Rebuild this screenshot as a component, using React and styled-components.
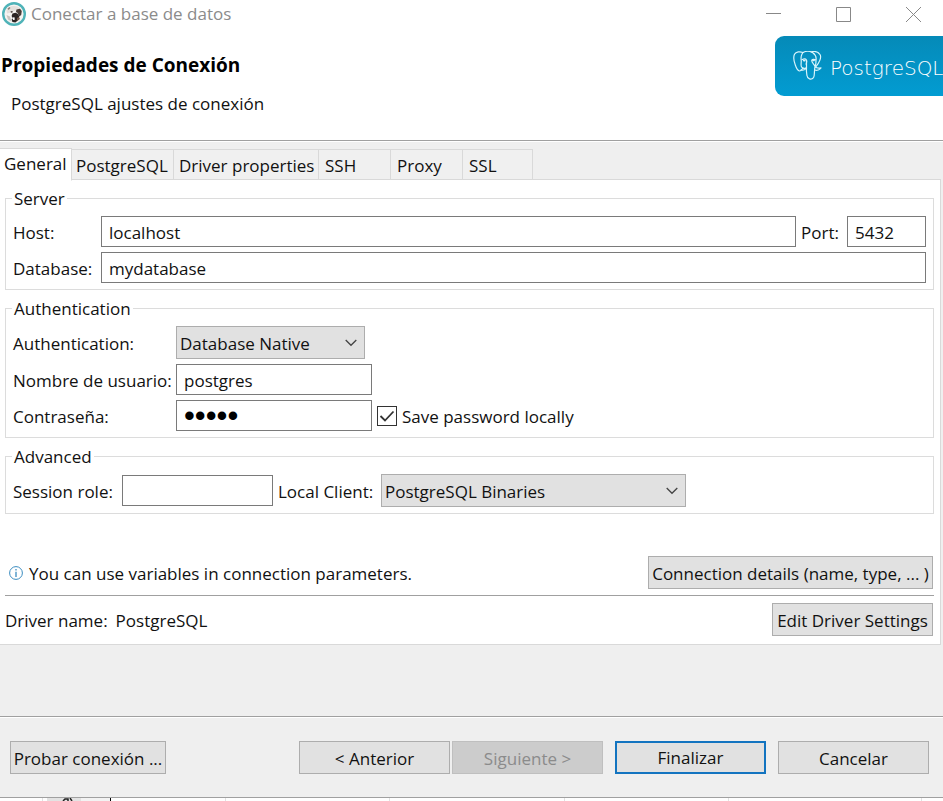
import React from "react";
import styled, { createGlobalStyle } from "styled-components";

const GlobalStyle = createGlobalStyle`
  * { box-sizing: border-box; }
  body {
    margin: 0;
    background: #fff;
    color: #111;
    font-family: "Open Sans", "Noto Sans", sans-serif;
    font-size: 17px;
    line-height: 24px;
  }
  button, input, select { font: inherit; color: inherit; margin: 0; }
`;

const Window = styled.div`
  display: flex;
  flex-direction: column;
  min-height: 100vh;
  overflow: hidden;
`;

const TitleBar = styled.div`
  display: flex;
  align-items: center;
  gap: 5px;
  height: 28px;
  padding-left: 2px;
  color: #8b8b8b;
`;

const TitleText = styled.span`
  flex: 1;
  white-space: nowrap;
`;

const WindowControls = styled.div`
  display: flex;
  gap: 10px;
`;

const WindowButton = styled.button`
  display: grid;
  place-items: center;
  width: 60px;
  height: 28px;
  padding: 0;
  border: 0;
  background: none;
`;

const Header = styled.header`
  display: flex;
  justify-content: space-between;
  height: 113px;
  padding-top: 8px;
  border-bottom: 1px solid #a0a0a0;
`;

const Heading = styled.div`
  display: flex;
  flex-direction: column;
  gap: 15px;
  padding-top: 17px;
`;

const Title = styled.h1`
  margin: 0;
  padding-left: 1px;
  font-size: 19px;
  font-weight: 700;
  line-height: 24px;
  color: #000;
`;

const Subtitle = styled.p`
  margin: 0;
  padding-left: 11px;
`;

const Banner = styled.div`
  display: flex;
  align-items: center;
  gap: 7px;
  width: 168px;
  height: 60px;
  padding-left: 18px;
  overflow: hidden;
  border-radius: 9px 0 0 9px;
  background: linear-gradient(#058ab8, #029cd2);
  color: #fff;
  white-space: nowrap;

  svg { flex: none; }
`;

const WordMark = styled.span`
  padding-top: 4px;
  font-family: "DejaVu Sans Light", "DejaVu Sans", sans-serif;
  font-size: 20px;
  font-weight: 200;
`;

const Body = styled.main`
  flex: 1;
  padding: 6px 2px 0 0;
  border-top: 1px solid #fff;
  background: #efefef;
`;

const TabList = styled.div`
  display: flex;
  align-items: flex-end;
`;

const Tab = styled.button`
  position: relative;
  width: ${(p) => p.$width}px;
  height: ${(p) => (p.$active ? 33 : 31)}px;
  margin-bottom: ${(p) => (p.$active ? -1 : 0)}px;
  padding: ${(p) => (p.$active ? "0 0 2px" : "2px 0 0")};
  padding-left: ${(p) => p.$inset}px;
  border: 1px solid #d9d9d9;
  border-left: 0;
  border-bottom-color: ${(p) => (p.$active ? "#fff" : "#d9d9d9")};
  background: ${(p) => (p.$active ? "#fff" : "#f0f0f0")};
  text-align: left;
  white-space: nowrap;
`;

const TabFill = styled.div`
  flex: 1;
  border-bottom: 1px solid #d9d9d9;
`;

const Panel = styled.section`
  display: flex;
  flex-direction: column;
  gap: 5px;
  padding: 5px 6px 8px 5px;
  border-right: 1px solid #d9d9d9;
  border-bottom: 1px solid #d9d9d9;
  background: #fff;
`;

const Group = styled.fieldset`
  min-width: 0;
  margin: 0;
  padding: 5px 7px 6px;
  border: 1px solid #dcdcdc;
`;

const Legend = styled.legend`
  padding: 2px 2px 0;
  margin-left: -1px;
`;

const Rows = styled.div`
  display: grid;
  gap: 5px;
`;

const Row = styled.div`
  display: flex;
  align-items: center;
  gap: 5px;
`;

const Label = styled.label`
  flex: none;
  width: ${(p) => p.$width}px;
  padding-top: 2px;
  white-space: nowrap;
`;

const Field = styled.input`
  flex: ${(p) => (p.$width ? "none" : "1")};
  width: ${(p) => (p.$width ? `${p.$width}px` : "auto")};
  min-width: 0;
  height: 31px;
  padding: 2px 7px 0;
  border: 1px solid #7a7a7a;
  border-radius: 0;
  background: #fff;
  outline: none;
`;

const PasswordField = styled(Field)`
  padding-top: 0;
  color: #000;
  font-family: "Liberation Sans", Arial, sans-serif;
  font-size: 31px;
`;

const SelectBox = styled.div`
  position: relative;
  flex: none;
  width: ${(p) => p.$width}px;
  height: 33px;

  svg {
    position: absolute;
    right: 8px;
    top: 13px;
    pointer-events: none;
  }
`;

const Select = styled.select`
  appearance: none;
  width: 100%;
  height: 100%;
  padding: 2px 24px 0 3px;
  border: 1px solid #adadad;
  border-radius: 0;
  background: #e1e1e1;
`;

const CheckLabel = styled.label`
  display: flex;
  align-items: center;
  gap: 5px;
  white-space: nowrap;
`;

const CheckText = styled.span`
  padding-top: 2px;
`;

const CheckBox = styled.span`
  position: relative;
  width: 20px;
  height: 20px;

  svg {
    position: absolute;
    inset: 0;
    pointer-events: none;
  }
  input:not(:checked) + svg { display: none; }
`;

const CheckInput = styled.input`
  appearance: none;
  display: block;
  width: 20px;
  height: 20px;
  border: 1px solid #333;
  background: #fff;
`;

const InfoBar = styled.div`
  display: flex;
  align-items: center;
  gap: 6px;
  margin-top: 37px;
  padding: 0 1px 0 4px;

  svg { flex: none; }
`;

const BarText = styled.span`
  flex: ${(p) => (p.$grow ? 1 : "none")};
  padding-top: 2px;
`;

const Divider = styled.hr`
  width: 100%;
  margin: 1px 0 2px;
  border: 0;
  border-top: 1px solid #a0a0a0;
`;

const DriverBar = styled.div`
  display: flex;
  align-items: center;
  gap: 8px;
  padding-right: 1px;
`;

const Button = styled.button`
  flex: none;
  width: ${(p) => p.$width}px;
  height: 33px;
  padding: ${(p) => (p.$primary ? 1 : 2)}px 0 0;
  border: ${(p) => (p.$primary ? "2px solid #1374c0" : "1px solid #adadad")};
  border-radius: 0;
  background: #e1e1e1;
  white-space: nowrap;

  &:disabled {
    border-color: #bfbfbf;
    background: #ccc;
    color: #8b8b8b;
  }
`;

const Footer = styled.footer`
  display: flex;
  align-items: center;
  justify-content: space-between;
  padding: 24px 14px 23px 10px;
  border-top: 1px solid #a0a0a0;
  border-bottom: 1px solid #a0a0a0;
  background: #efefef;
  box-shadow: inset 0 1px #fff;
`;

const FooterActions = styled.div`
  display: flex;
  gap: 12px;
`;

const StepButtons = styled.div`
  display: flex;
  gap: 2px;
`;

const SheetEdge = styled.div`
  display: flex;
  height: 3px;
  background: #fff;
`;

const SheetCell = styled.div`
  flex: none;
  width: ${(p) => p.$width}px;
  border-right: 1px solid ${(p) => p.$line || "#e2e2e2"};
  background: ${(p) => p.$fill || "#fff"};

  svg { display: block; margin-left: 15px; }
`;

const BeaverIcon = () => (
  <svg width="24" height="24" viewBox="0 0 24 24" aria-hidden="true">
    <circle cx="12" cy="12" r="10.800" fill="#f5f3f1" stroke="#4fb3b8" strokeWidth="2.400" />
    <path d="M4.500 8C6 5 9 3.800 12 4c3.500 0 6 1.500 7 4l-2 2-4-1.500-4 2-4 1z" fill="#e4e0dc" />
    <path d="M5.500 6.500l2-1.500 1 1-2 2z" fill="#8a8079" />
    <path d="M8.500 9.500l1.800-.6.5 1.300-1.800.6z" fill="#3b2e2a" />
    <path d="M14.500 7.500l3.500-.8 1.800 2.300-.6 4-2 1.500-1.500-3.500-1.800-1z" fill="#4a3d38" />
    <path d="M10.500 11.500l3-.8 2.700 1.300 1 2.500-.8 3.500-3 2.500-3-.5-.8-2.500 1.200-1-1.200-2.500z" fill="#2c2423" />
    <path d="M4.500 13l3.500 1.500 1.500 5-3.500-2z" fill="#c9c4bf" />
    <path d="M10.500 15.500l2-.3.300 2.500-1.800.3z" fill="#fff" />
    <path d="M15 16l2-1 1 2-3 2z" fill="#75584a" />
  </svg>
);

const ElephantIcon = () => (
  <svg width="30" height="30" viewBox="0 0 30 30" fill="none" stroke="#d8f4fb" strokeWidth="1.200" strokeLinecap="round" strokeLinejoin="round" aria-hidden="true">
    <path d="M10 1.500C7 .3 3 .5 1.500 3.300.2 6 1 10.500 2.300 14c1.200 3.500 2.700 5.700 4.100 6 1.200.2 2.600-1.500 3.600-3" />
    <path d="M10 1.500C8.200 3.800 7.700 6.500 8.200 9.500c.4 2.500-.8 4.300.2 6.300.9 1.800 3.500 2.200 5.100.8" />
    <path d="M10 1.500c3-1.600 7-1.500 9.800.3 2.500 1.800 3.700 4.700 3.200 7.500-.2 2 .2 3.300-.6 5.200" />
    <path d="M18 .9c3.500-.9 7-.3 9 2.600 1.800 2.800-.6 8.200-4.200 12.300" />
    <path d="M22 15.800c1.300 1.300 3.500 1.500 6 1.100-1.200 1.800-4 2.900-6.200 2.100" />
    <path d="M13.500 10v7.300c-.3 2 .1 4.700.4 7 .4 4 4.500 4.900 6.600 2.300 1-1.400.8-3.800 1-6.600.1-1.800.2-3 .5-4.200" />
    <path d="M9 8.700c1.700-1 3.700-1 4.500.3.700 1.500-.2 2.900-.3 4.300M22.600 8.800c-1.600-.8-3.600-.7-3.900.6-.3 1.800 1.900 3.400 3.500 5.900M13.300 16.700c-1.300 2.600-3.300 2.900-5.300 2.200" />
    <path d="M10.700 9.600h1.200M19.900 9.400h1.200" strokeWidth="1.600" />
  </svg>
);

const Chevron = () => (
  <svg width="12" height="8" viewBox="0 0 12 8" fill="none" stroke="#444" strokeWidth="1.300" aria-hidden="true">
    <path d="M.7 1L6 6.300 11.300 1" />
  </svg>
);

const InfoIcon = () => (
  <svg width="14" height="14" viewBox="0 0 14 14" fill="none" stroke="#3c8dc0" aria-hidden="true">
    <circle cx="7" cy="7" r="6.400" />
    <path d="M7 3v1.500M7 5.800V11" strokeWidth="1.300" />
  </svg>
);

const TABS = [
  { name: "General", width: 72, inset: 4 },
  { name: "PostgreSQL", width: 102, inset: 4 },
  { name: "Driver properties", width: 145, inset: 5 },
  { name: "SSH", width: 72, inset: 6 },
  { name: "Proxy", width: 72, inset: 6 },
  { name: "SSL", width: 70, inset: 6 },
];

function DropDown({ id, width, value }) {
  return (
    <SelectBox $width={width}>
      <Select id={id} defaultValue={value}>
        <option>{value}</option>
      </Select>
      <Chevron />
    </SelectBox>
  );
}

export default function App() {
  const [tab, setTab] = React.useState("General");
  return (
    <Window>
      <GlobalStyle />
      <TitleBar>
        <BeaverIcon />
        <TitleText>Conectar a base de datos</TitleText>
        <WindowControls>
          <WindowButton aria-label="Minimizar">
            <svg width="15" height="15" stroke="#888"><path d="M0 6.500h15" /></svg>
          </WindowButton>
          <WindowButton aria-label="Maximizar">
            <svg width="15" height="15" stroke="#888" fill="none"><path d="M.5.5h14v14H.5z" /></svg>
          </WindowButton>
          <WindowButton aria-label="Cerrar">
            <svg width="15" height="15" stroke="#888"><path d="M0 0l15 15M15 0L0 15" /></svg>
          </WindowButton>
        </WindowControls>
      </TitleBar>

      <Header>
        <Heading>
          <Title>Propiedades de Conexión</Title>
          <Subtitle>PostgreSQL ajustes de conexión</Subtitle>
        </Heading>
        <Banner>
          <ElephantIcon />
          <WordMark>PostgreSQL</WordMark>
        </Banner>
      </Header>

      <Body>
        <TabList role="tablist">
          {TABS.map((t) => (
            <Tab
              key={t.name}
              role="tab"
              aria-selected={t.name === tab}
              $active={t.name === tab}
              $width={t.width}
              $inset={t.inset}
              onClick={() => setTab(t.name)}
            >
              {t.name}
            </Tab>
          ))}
          <TabFill />
        </TabList>

        <Panel role="tabpanel">
          <Group>
            <Legend>Server</Legend>
            <Rows>
              <Row>
                <Label $width={83} htmlFor="host">Host:</Label>
                <Field id="host" defaultValue="localhost" />
                <Label $width={41} htmlFor="port">Port:</Label>
                <Field id="port" $width={79} defaultValue="5432" />
              </Row>
              <Row>
                <Label $width={83} htmlFor="database">Database:</Label>
                <Field id="database" defaultValue="mydatabase" />
              </Row>
            </Rows>
          </Group>

          <Group>
            <Legend>Authentication</Legend>
            <Rows>
              <Row>
                <Label $width={158} htmlFor="auth">Authentication:</Label>
                <DropDown id="auth" width={189} value="Database Native" />
              </Row>
              <Row>
                <Label $width={158} htmlFor="user">Nombre de usuario:</Label>
                <Field id="user" $width={196} defaultValue="postgres" />
              </Row>
              <Row>
                <Label $width={158} htmlFor="password">Contraseña:</Label>
                <PasswordField id="password" type="password" $width={196} defaultValue="12345" />
                <CheckLabel>
                  <CheckBox>
                    <CheckInput type="checkbox" defaultChecked />
                    <svg width="20" height="20" fill="none" stroke="#333" strokeWidth="1.800">
                      <path d="M3.500 10l4.500 4.500L16.500 5.500" />
                    </svg>
                  </CheckBox>
                  <CheckText>Save password locally</CheckText>
                </CheckLabel>
              </Row>
            </Rows>
          </Group>

          <Group>
            <Legend>Advanced</Legend>
            <Row>
              <Label $width={104} htmlFor="role">Session role:</Label>
              <Field id="role" $width={151} />
              <Label $width={98} htmlFor="client">Local Client:</Label>
              <DropDown id="client" width={305} value="PostgreSQL Binaries" />
            </Row>
          </Group>

          <InfoBar>
            <InfoIcon />
            <BarText $grow>You can use variables in connection parameters.</BarText>
            <Button $width={285}>Connection details (name, type, ... )</Button>
          </InfoBar>
          <Divider />
          <DriverBar>
            <BarText>Driver name:</BarText>
            <BarText $grow>PostgreSQL</BarText>
            <Button $width={161}>Edit Driver Settings</Button>
          </DriverBar>
        </Panel>
      </Body>

      <Footer>
        <Button $width={156}>Probar conexión ...</Button>
        <FooterActions>
          <StepButtons>
            <Button $width={151}>&lt; Anterior</Button>
            <Button $width={151} disabled>Siguiente &gt;</Button>
          </StepButtons>
          <Button $width={151} $primary>Finalizar</Button>
          <Button $width={151}>Cancelar</Button>
        </FooterActions>
      </Footer>
      <SheetEdge>
        <SheetCell $width={43} />
        <SheetCell $width={4} $line="#fff" />
        <SheetCell $width={34} $fill="#e3e3e3">
          <svg width="12" height="3" fill="none" stroke="#222" strokeWidth="1.500">
            <path d="M1 3l2-2h3v2M8 0l2 3" />
          </svg>
        </SheetCell>
        <SheetCell $width={30} $fill="#f3f3f3" $line="#000" />
        <SheetCell $width={115} />
        <SheetCell $width={164} />
        <SheetCell $width={175} />
        <SheetCell $width={164} />
        <SheetCell $width={193} />
      </SheetEdge>
    </Window>
  );
}
